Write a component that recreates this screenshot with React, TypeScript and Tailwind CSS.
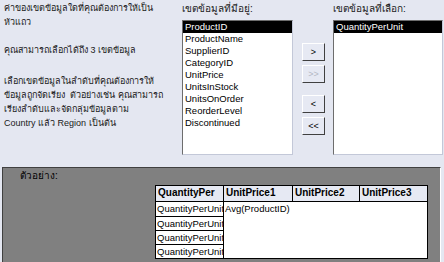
const available = [
    'ProductID',
    'ProductName',
    'SupplierID',
    'CategoryID',
    'UnitPrice',
    'UnitsInStock',
    'UnitsOnOrder',
    'ReorderLevel',
    'Discontinued',
];

const selected = ['QuantityPerUnit'];

type FieldListProps = {
    items: string[],
    active: number
}
function FieldList(props: FieldListProps) {
    return (
        <div className="h-[135px] bg-white border border-t-[#6d6d6d] border-l-[#6d6d6d] border-r-[#c3c8d8] border-b-[#c3c8d8] overflow-hidden">
            {props.items.map((d, i) => (
                <div
                    key={d}
                    className={`h-[12px] leading-[12px] pl-[2px] text-[9.5px] whitespace-nowrap ${i === props.active ? 'bg-black text-white' : 'text-black'}`}
                >
                    {d}
                </div>
            ))}
        </div>
    )
}

type MoveButtonProps = {
    label: string,
    disabled?: boolean,
    className?: string
}
function MoveButton(props: MoveButtonProps) {
    return (
        <button
            className={`w-[23px] h-[18px] bg-[#e6e9f3] border border-t-white border-l-white border-r-[#404040] border-b-[#404040] text-[9px] leading-none flex items-center justify-center ${props.disabled ? 'text-[#b4b8c4]' : 'text-black'} ${props.className ?? ''}`}
        >
            {props.label}
        </button>
    )
}

export default function App() {
    return (
        <div className="w-[444px] h-[262px] bg-[#e4e7f1] text-[#1a1a1a] overflow-hidden flex flex-col font-['Liberation_Sans',sans-serif]">
            {/* Field pickers */}
            <div className="h-[167px] flex">
                <div className="w-[178px] pl-[4px] pt-[1px] text-[9px] leading-[14px] whitespace-nowrap overflow-hidden">
                    <p>ค่าของเขตข้อมูลใดที่คุณต้องการให้เป็น<br />หัวแถว</p>
                    <p className="mt-[14px]">คุณสามารถเลือกได้ถึง 3 เขตข้อมูล</p>
                    <p className="mt-[17px]">
                        เลือกเขตข้อมูลในลำดับที่คุณต้องการให้<br />
                        ข้อมูลถูกจัดเรียง&nbsp; ตัวอย่างเช่น คุณสามารถ<br />
                        เรียงลำดับและจัดกลุ่มข้อมูลตาม<br />
                        Country แล้ว Region เป็นต้น
                    </p>
                </div>

                <div className="w-[111px] ml-[4px]">
                    <div className="h-[20px] pt-[2px] text-[10px] leading-[14px]">เขตข้อมูลที่มีอยู่:</div>
                    <FieldList items={available} active={0} />
                </div>

                <div className="w-[40px] pl-[9px] pt-[43px] flex flex-col">
                    <MoveButton label=">" />
                    <MoveButton label=">>" disabled className="mt-[4px]" />
                    <MoveButton label="<" className="mt-[12px]" />
                    <MoveButton label="<<" className="mt-[4px]" />
                </div>

                <div className="w-[110px]">
                    <div className="h-[20px] pt-[2px] text-[10px] leading-[14px]">เขตข้อมูลที่เลือก:</div>
                    <FieldList items={selected} active={0} />
                </div>
            </div>

            {/* Preview */}
            <div className="ml-[2px] w-[439px] flex-1 bg-[#808080] border border-t-[#404040] border-l-[#404040] border-r-white border-b-0">
                <div className="pl-[17px] pt-[1px] h-[17px] text-[10px] leading-[14px] text-black">ตัวอย่าง:</div>
                <div className="ml-[152px] w-[273px] border border-black">
                    <div className="flex h-[15px] bg-[#e6e9f3] text-[10px] font-bold leading-[14px] text-black">
                        <div className="w-[68px] pl-[2px] border-r border-black overflow-hidden whitespace-nowrap">QuantityPer</div>
                        <div className="w-[69px] pl-[2px] border-r border-black">UnitPrice1</div>
                        <div className="w-[67px] pl-[2px] border-r border-black">UnitPrice2</div>
                        <div className="flex-1 pl-[2px]">UnitPrice3</div>
                    </div>
                    <div className="flex border-t border-black bg-white text-[9.5px] leading-[13px] text-black">
                        <div className="w-[68px] border-r border-black">
                            {[0, 1, 2, 3].map((i) => (
                                <div key={i} className={`h-[14px] pl-[1px] overflow-hidden whitespace-nowrap ${i > 0 ? 'border-t border-black' : ''}`}>
                                    QuantityPerUnit
                                </div>
                            ))}
                        </div>
                        <div className="flex-1 pl-[1px]">Avg(ProductID)</div>
                    </div>
                </div>
            </div>
        </div>
    )
}
